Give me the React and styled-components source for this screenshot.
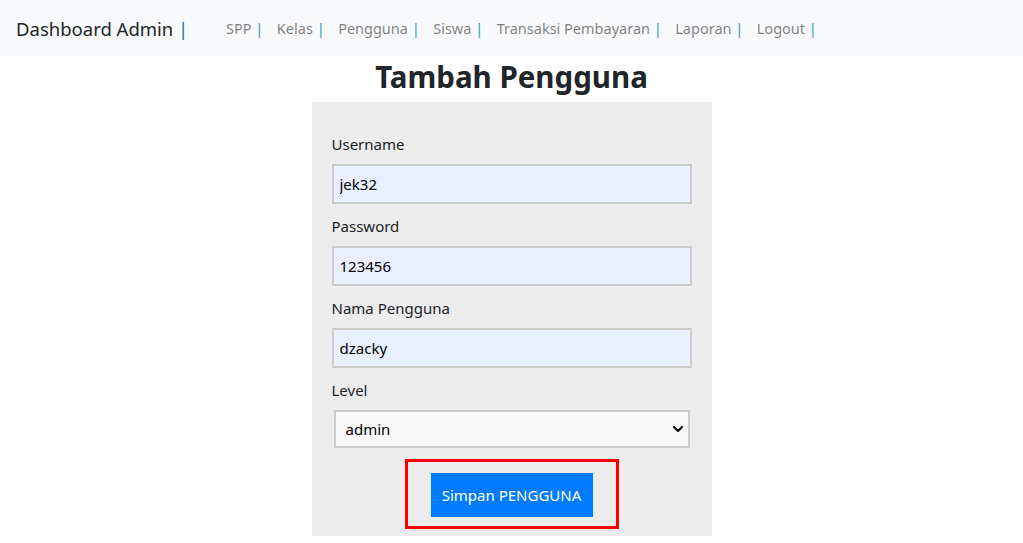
import styled, { createGlobalStyle } from "styled-components";
import { ChevronDown } from "lucide-react";

const menus = ["SPP", "Kelas", "Pengguna", "Siswa", "Transaksi Pembayaran", "Laporan", "Logout"];

const fields = [
    { label: "Username", value: "jek32" },
    { label: "Password", value: "123456" },
    { label: "Nama Pengguna", value: "dzacky" },
];

export default function App(){
    return(
        <>
            <Global />
            <Navbar>
                <Brand>Dashboard Admin <Pipe $dark>|</Pipe></Brand>
                <Menu>
                    {menus.map((m) => (
                        <MenuItem key={m}>{m} <Pipe>|</Pipe></MenuItem>
                    ))}
                </Menu>
            </Navbar>
            <Title>Tambah Pengguna</Title>
            <Form>
                {fields.map((f) => (
                    <Group key={f.label}>
                        <Label>{f.label}</Label>
                        <Input defaultValue={f.value} />
                    </Group>
                ))}
                <Label>Level</Label>
                <SelectWrap>
                    <Select defaultValue="admin">
                        <option value="admin">admin</option>
                        <option value="petugas">petugas</option>
                    </Select>
                    <Arrow size={16} strokeWidth={3.5} />
                </SelectWrap>
                <Highlight>
                    <Button type="button">Simpan PENGGUNA</Button>
                </Highlight>
            </Form>
        </>
    )
}

const Global = createGlobalStyle`
    body{
        margin: 0;
        background: #fff;
        font-family: "Noto Sans", "Open Sans", sans-serif;
        color: #212529;
    }
`
const Navbar = styled.nav`
    height: 56px;
    background: #f8f9fa;
    display: flex;
    align-items: center;
    padding: 0 16px;
`
const Brand = styled.div`
    font-size: 18.5px;
    color: #212529;
    margin-right: 31px;
`
const Pipe = styled.span`
    color: ${(p) => (p.$dark ? "#1b75b5" : "#17a2b8")};
`
const Menu = styled.ul`
    display: flex;
    list-style: none;
    margin: 0;
    padding: 0;
`
const MenuItem = styled.li`
    font-size: 14.5px;
    color: rgba(0,0,0,.5);
    padding: 0 6.75px;
`
const Title = styled.h1`
    margin: 2px 0 6px;
    text-align: center;
    font-size: 29.5px;
    font-weight: 700;
    line-height: 38px;
`
const Form = styled.form`
    width: 360px;
    margin: 0 auto;
    background: #ececec;
    padding: 30px 20px 7px;
    display: flex;
    flex-direction: column;
`
const Group = styled.div`
    display: flex;
    flex-direction: column;
    margin-bottom: 10px;
`
const Label = styled.label`
    font-size: 15px;
    line-height: 24px;
    margin-bottom: 8px;
`
const Input = styled.input`
    box-sizing: border-box;
    height: 40px;
    border: 2px solid #cccccc;
    background: #e8f0fe;
    padding: 0 6px;
    font-family: inherit;
    font-size: 15px;
    color: #000;
    outline: none;
`
const SelectWrap = styled.div`
    position: relative;
    margin: 0 2px;
`
const Select = styled.select`
    box-sizing: border-box;
    width: 100%;
    height: 38px;
    appearance: none;
    border: 2px solid #cccccc;
    background: #f8f8f8;
    padding: 0 10px;
    font-family: inherit;
    font-size: 15px;
    color: #000;
    outline: none;
`
const Arrow = styled(ChevronDown)`
    position: absolute;
    right: 4px;
    top: 11px;
    color: #111;
    pointer-events: none;
`
const Highlight = styled.div`
    align-self: center;
    margin-top: 11px;
    border: 3px solid #ff0000;
    padding: 11px 23px 9px;
`
const Button = styled.button`
    height: 44px;
    width: 162px;
    border: none;
    background: #007bff;
    color: #fff;
    font-family: inherit;
    font-size: 15px;
`
